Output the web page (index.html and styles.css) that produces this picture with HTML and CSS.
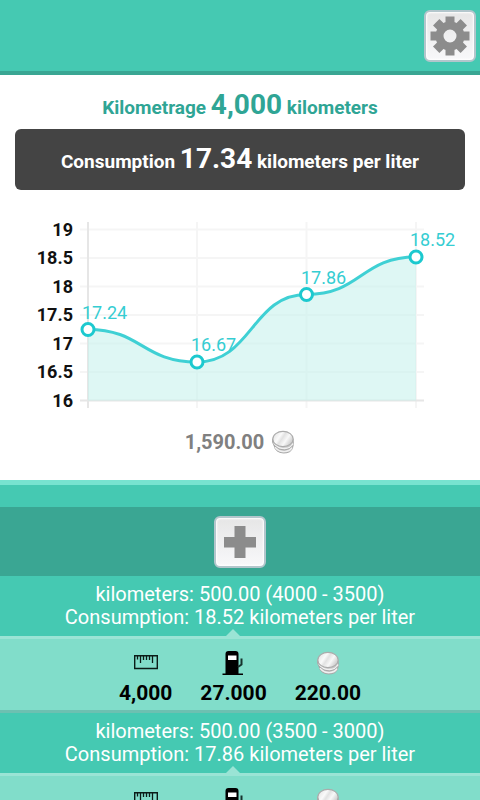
FILE: index.html
```html
<!DOCTYPE html>
<html lang="en">
<head>
  <meta charset="UTF-8">
  <meta name="viewport" content="width=device-width, initial-scale=1.0">
  <title>Fuel consumption</title>
  <link rel="stylesheet" href="styles.css">
</head>
<body>
  <!-- shared icons -->
  <svg class="defs" width="0" height="0" aria-hidden="true">
    <defs>
      <linearGradient id="silver" x1="0" y1="0" x2="1" y2="0.5">
        <stop offset="0" stop-color="#dcdcdc"/>
        <stop offset="0.4" stop-color="#fafafa"/>
        <stop offset="0.55" stop-color="#e2e2e2"/>
        <stop offset="0.75" stop-color="#f8f8f8"/>
        <stop offset="1" stop-color="#d0d0d0"/>
      </linearGradient>
      <symbol id="coins" viewBox="0 0 24 24">
        <path d="M1.500 9 Q1 13 3 15 Q4 22.500 12.500 23 Q20 23 21.500 18 Q23 15 22 9z" fill="#c8c8c8" stroke="#a8a8a8"/>
        <path d="M3 13 Q7 19 13.500 18.500 Q20 18.500 22 13.500 M4 17 Q8 22 13 21.500 Q18.500 21.500 21 17.500" fill="none" stroke="#f0f0f0" stroke-width="1.500"/>
        <path d="M2.500 15 Q8 20.500 13.500 20 Q19 19.500 22 15.500" fill="none" stroke="#a0a0a0" stroke-width="0.800"/>
        <ellipse cx="12" cy="9" rx="10.200" ry="7.600" fill="url(#silver)" stroke="#acacac" stroke-width="1.200"/>
      </symbol>
      <symbol id="ruler" viewBox="0 0 24 24">
        <path d="M0.700 4.700H23.300V17.500H0.700z" fill="none" stroke="#0b1c18" stroke-width="1.400"/>
        <path d="M3.500 5V8.500M6.500 5V12M9.500 5V9M12.500 5V9M15.500 5V9M18.500 5V12" stroke="#0b1c18" stroke-width="1.300"/>
      </symbol>
      <symbol id="pump" viewBox="0 0 24 24">
        <path d="M3.500 3Q3.500 0 6.500 0H13.500Q16.500 0 16.500 3V22.500H21V24H0.500V22.500H3.500z"/>
        <path d="M6 4.500H14.500V9H6z" fill="#fff"/>
        <path d="M19.500 7.500V13.500L16 16" fill="none" stroke="#17332d" stroke-width="2"/>
      </symbol>
    </defs>
  </svg>

  <header class="topbar">
    <button class="icon-btn" type="button" aria-label="Settings">
      <svg width="40" height="40" viewBox="-20 -20 40 40">
        <g fill="#8c8c8c">
          <path fill-rule="evenodd" d="M-14.500 0A14.500 14.500 0 1 1 14.500 0A14.500 14.500 0 1 1 -14.500 0zM-6.500 0A6.500 6.500 0 1 0 6.500 0A6.500 6.500 0 1 0 -6.500 0z"/>
          <path id="tooth" d="M-4.500 -19.500H4.500V-12H-4.500z"/>
          <use href="#tooth" transform="rotate(45)"/>
          <use href="#tooth" transform="rotate(90)"/>
          <use href="#tooth" transform="rotate(135)"/>
          <use href="#tooth" transform="rotate(180)"/>
          <use href="#tooth" transform="rotate(225)"/>
          <use href="#tooth" transform="rotate(270)"/>
          <use href="#tooth" transform="rotate(315)"/>
        </g>
      </svg>
    </button>
  </header>

  <section class="summary">
    <p class="total">Kilometrage <span class="big">4,000</span> kilometers</p>
    <p class="average">Consumption <span class="big">17.34</span> kilometers per liter</p>

    <svg class="chart" viewBox="0 0 450 200" role="img" aria-label="Consumption chart">
      <g class="grid">
        <path d="M65 14.500H409M65 43H409M65 71.500H409M65 100H409M65 128.500H409M65 157H409"/>
        <path d="M182 7V193M291.500 7V193M401 7V193"/>
        <path class="axis" d="M65 185.500H409M73 7V193"/>
      </g>
      <path class="area" d="M73 114.500C127 114.500 127 147 182 147S237 79.500 291.500 79.500S346 42 401 42V185.500H73z"/>
      <path class="line" d="M73 114.500C127 114.500 127 147 182 147S237 79.500 291.500 79.500S346 42 401 42"/>
      <g class="points">
        <circle cx="73" cy="114.500" r="6"/>
        <circle cx="182" cy="147" r="6"/>
        <circle cx="291.500" cy="79.500" r="6"/>
        <circle cx="401" cy="42" r="6"/>
      </g>
      <g class="scale">
        <text x="58" y="21">19</text>
        <text x="58" y="49">18.5</text>
        <text x="58" y="78">18</text>
        <text x="58" y="106">17.5</text>
        <text x="58" y="135">17</text>
        <text x="58" y="163">16.5</text>
        <text x="58" y="192">16</text>
      </g>
      <g class="values">
        <text x="67" y="104">17.24</text>
        <text x="176" y="136">16.67</text>
        <text x="286" y="69">17.86</text>
        <text x="395" y="31">18.52</text>
      </g>
    </svg>

    <p class="cost">1,590.00 <svg width="24" height="24"><use href="#coins"/></svg></p>
  </section>

  <div class="addbar">
    <button class="icon-btn" type="button" aria-label="Add">
      <svg width="32" height="32" viewBox="0 0 32 32">
        <path d="M10.500 0H21.500V11H32V21.500H21.500V32H10.500V21.500H0V11H10.500z" fill="#8c8c8c"/>
      </svg>
    </button>
  </div>

  <main class="log">
    <article class="entry">
      <div class="entry-title">
        <p>kilometers: 500.00 (4000 - 3500)</p>
        <p>Consumption: 18.52 kilometers per liter</p>
      </div>
      <div class="entry-data">
        <div class="cell"><svg width="24" height="24"><use href="#ruler"/></svg><span>4,000</span></div>
        <div class="cell"><svg width="24" height="24"><use href="#pump"/></svg><span>27.000</span></div>
        <div class="cell"><svg width="24" height="24"><use href="#coins"/></svg><span>220.00</span></div>
      </div>
    </article>
    <article class="entry">
      <div class="entry-title">
        <p>kilometers: 500.00 (3500 - 3000)</p>
        <p>Consumption: 17.86 kilometers per liter</p>
      </div>
      <div class="entry-data">
        <div class="cell"><svg width="24" height="24"><use href="#ruler"/></svg></div>
        <div class="cell"><svg width="24" height="24"><use href="#pump"/></svg></div>
        <div class="cell"><svg width="24" height="24"><use href="#coins"/></svg></div>
      </div>
    </article>
  </main>
</body>
</html>
```
FILE: styles.css
```css
body {
  margin: 0;
  background: #45c9b2;
  font-family: Roboto, sans-serif;
  font-size: 20px;
  scrollbar-width: none;
}
p {
  margin: 0;
}
.defs {
  position: absolute;
}
.topbar {
  display: flex;
  justify-content: flex-end;
  padding: 10px 4px 9px;
  border-bottom: 4px solid #3aa693;
}
.icon-btn {
  display: flex;
  align-items: center;
  justify-content: center;
  width: 52px;
  height: 52px;
  padding: 0;
  border: 2px solid #b3c6cc;
  border-radius: 6px;
  background: linear-gradient(#e6e6e6, #f8f8fa);
  box-shadow: inset 0 0 2px 1px #fff;
  cursor: pointer;
}

/* summary */
.summary {
  padding: 16px 15px 25px;
  background: #fff;
  border-bottom: 5px solid #77e3d0;
  font-weight: bold;
  text-align: center;
}
.total,
.average {
  font-size: 19px;
}
.total {
  color: #2fa595;
  line-height: 30px;
}
.big {
  font-size: 28px;
  line-height: 28px;
}
.average {
  margin-top: 6px;
  padding-top: 4px;
  border-radius: 6px;
  background: #444;
  color: #fff;
  line-height: 57px;
}
.chart {
  display: block;
  width: 100%;
  margin-top: 25px;
}
.grid path {
  fill: none;
  stroke: #f5f5f5;
  stroke-width: 2;
}
.grid .axis {
  stroke: #e6e6e6;
}
.area {
  fill: #c8f2ec;
  fill-opacity: 0.6;
}
.line {
  fill: none;
  stroke: #3fd0d4;
  stroke-width: 3;
}
.points circle {
  fill: #fff;
  stroke: #1cc9cf;
  stroke-width: 3;
}
.scale text {
  fill: #111;
  font-size: 18px;
  text-anchor: end;
}
.values text {
  fill: #35cdd2;
  font-size: 18px;
  font-weight: normal;
}
.cost {
  display: flex;
  align-items: center;
  justify-content: center;
  gap: 7px;
  margin-top: 14px;
  color: #808080;
  line-height: 26px;
}

/* add button */
.addbar {
  display: flex;
  justify-content: center;
  margin-top: 22px;
  padding: 9px 0 8px;
  background: #3aa693;
}

/* log entries */
.entry-title {
  position: relative;
  padding: 7px 0;
  color: #fff;
  line-height: 23px;
  text-align: center;
}
.entry-title::after {
  content: "";
  position: absolute;
  left: 50%;
  bottom: 0;
  margin-left: -14px;
  border: 7px solid transparent;
  border-top: 0;
  border-bottom-color: #9ae4d5;
}
.entry-data {
  display: flex;
  justify-content: center;
  gap: 28px;
  padding: 12px 0 5px;
  border-top: 3px solid #9ae4d5;
  border-bottom: 3px solid #6dc0b1;
  background: #81ddca;
}
.cell {
  display: flex;
  flex-direction: column;
  align-items: center;
  gap: 6px;
  min-width: 53px;
  color: #000;
  font-size: 21px;
  font-weight: bold;
  line-height: 24px;
}
.cell + .cell {
  min-width: 66px;
}
```
